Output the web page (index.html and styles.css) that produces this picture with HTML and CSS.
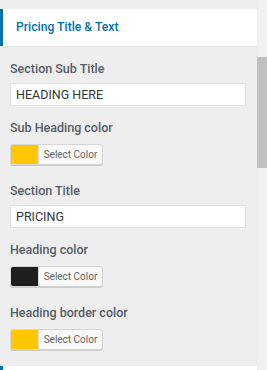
FILE: index.html
```html
<!DOCTYPE html>
<html lang="en">
<head>
    <meta charset="UTF-8">
    <meta name="viewport" content="width=device-width, initial-scale=1.0">
    <title>Pricing Title &amp; Text</title>
    <link rel="stylesheet" href="styles.css">
</head>
<body>
    <div class="panel">
        <div class="panel-content">
            <h3 class="section-head">Pricing Title &amp; Text</h3>

            <div class="fields">
                <div class="field">
                    <label class="field-label">Section Sub Title</label>
                    <input class="text-input" type="text" value="HEADING HERE">
                </div>

                <div class="field field-color">
                    <label class="field-label">Sub Heading color</label>
                    <button class="color-btn"><span class="swatch swatch-yellow"></span><span class="color-text">Select Color</span></button>
                </div>

                <div class="field">
                    <label class="field-label">Section Title</label>
                    <input class="text-input" type="text" value="PRICING">
                </div>

                <div class="field field-color">
                    <label class="field-label">Heading color</label>
                    <button class="color-btn"><span class="swatch swatch-dark"></span><span class="color-text">Select Color</span></button>
                </div>

                <div class="field field-color">
                    <label class="field-label">Heading border color</label>
                    <button class="color-btn"><span class="swatch swatch-yellow"></span><span class="color-text">Select Color</span></button>
                </div>
            </div>

            <h3 class="section-head"></h3>
        </div>

        <!-- scrollbar -->
        <div class="scroll-track">
            <div class="scroll-thumb"></div>
        </div>
    </div>
</body>
</html>
```

FILE: styles.css
```css
body {
    margin: 0;
    background-color: #eeeeee;
    font-family: Roboto, "Liberation Sans", sans-serif;
    overflow: hidden;
}

.panel {
    display: flex;
    height: 370px;
}

.panel-content {
    flex: 1;
    padding-top: 9px;
}

.section-head {
    margin: 0;
    height: 37px;
    box-sizing: border-box;
    background-color: #ffffff;
    border-left: 3px solid #0073aa;
    padding-left: 13px;
    line-height: 37px;
    font-size: 12.2px;
    font-weight: 500;
    color: #0073aa;
    box-shadow: 0 1px 0 #e4e4e4;
}

.fields {
    padding: 15px 11px 16px 10px;
    display: flex;
    flex-direction: column;
}

.field {
    display: flex;
    flex-direction: column;
    align-items: flex-start;
    margin-bottom: 14px;
}

.field-label {
    font-size: 12.5px;
    font-weight: 500;
    color: #555d66;
    line-height: 16px;
    margin-bottom: 6px;
}

.field-color {
    margin-bottom: 18px;
}

.field-color .field-label {
    margin-bottom: 8px;
}

.field:last-child {
    margin-bottom: 0;
}

.text-input {
    width: 100%;
    height: 23px;
    box-sizing: border-box;
    border: 1px solid #e1e1e1;
    background: #ffffff;
    padding: 0 5px;
    font-family: Roboto, "Liberation Sans", sans-serif;
    font-size: 12.5px;
    color: #32373c;
    margin: 0;
    outline: none;
}

.color-btn {
    display: flex;
    align-items: stretch;
    height: 21px;
    width: 93px;
    padding: 0;
    margin: 0;
    border: 1px solid #d6d6d6;
    border-radius: 3px;
    background: #f9f9f9;
    box-shadow: 0 1px 0 #cccccc;
    overflow: hidden;
    cursor: pointer;
}

.swatch {
    width: 27px;
}

.swatch-yellow {
    background-color: #ffc700;
}

.swatch-dark {
    background-color: #1e1e1e;
}

.color-text {
    flex: 1;
    border-left: 1px solid #dddddd;
    font-family: Roboto, "Liberation Sans", sans-serif;
    font-size: 10px;
    color: #666666;
    line-height: 19px;
    text-align: center;
}

.scroll-track {
    width: 10px;
    background-color: #f1f1f1;
    padding-top: 57px;
}

.scroll-thumb {
    height: 111px;
    background-color: #c1c1c1;
}
```
